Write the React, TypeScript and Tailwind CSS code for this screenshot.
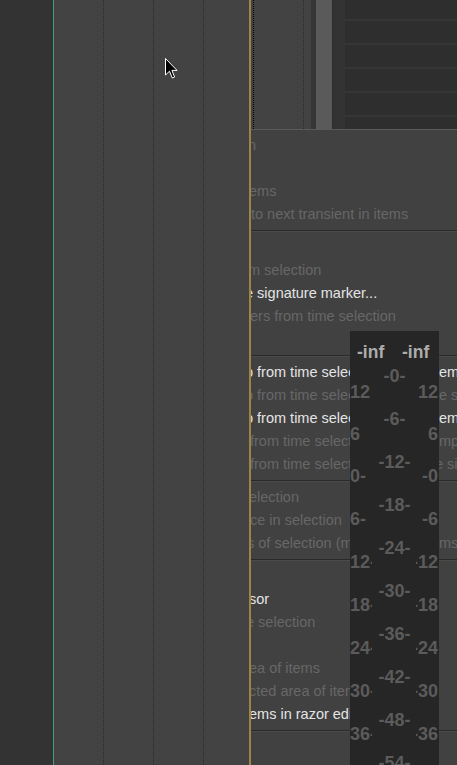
type Row = { l?: string; lx?: number; r?: string; rx?: number; hi?: boolean; rhi?: boolean };

const sections: Row[][] = [
  [
    { l: 'n', lx: -3 },
    {},
    { l: 'ems', lx: -2 },
    { l: 'to next transient in items', lx: 0 },
  ],
  [
    {},
    { l: 'm selection', lx: -3 },
    { l: 'e signature marker...', lx: -6, hi: true },
    { l: 'ers from time selection', lx: -1 },
    {},
  ],
  [
    { l: 'p from time selection', lx: -6, hi: true, r: 'ems', rhi: true },
    { l: 'p from time selection', lx: -6, r: 'e se' },
    { l: 'p from time selection', lx: -6, hi: true, r: 'ems', rhi: true },
    { l: 'from time selection', lx: -1, r: 'mpl' },
    { l: 'from time selection', lx: -1, r: 'e sig', rx: -4 },
  ],
  [
    { l: 'election', lx: -2 },
    { l: 'ce in selection', lx: -1 },
    { l: 's of selection (moving)', lx: -4, r: 'ms' },
  ],
  [
    {},
    { l: 'sor', lx: -2, hi: true },
    { l: 'e selection', lx: -5 },
    {},
    { l: 'ea of items', lx: -2 },
    { l: 'cted area of items', lx: -2 },
    { l: 'ems in razor edit area', lx: -2, hi: true },
  ],
  [{}, {}],
];

const centerTicks = ['-0-', '-6-', '-12-', '-18-', '-24-', '-30-', '-36-', '-42-', '-48-', '-54-'];
const edgeTicks = [
  { top: 51, l: '12', r: '12' },
  { top: 93, l: '6', r: '6' },
  { top: 135, l: '0-', r: '-0' },
  { top: 178, l: '6-', r: '-6' },
  { top: 221, l: '12-', r: '-12', cut: true },
  { top: 264, l: '18-', r: '-18', cut: true },
  { top: 307, l: '24-', r: '-24', cut: true },
  { top: 350, l: '30-', r: '-30', cut: true },
  { top: 393, l: '36-', r: '-36', cut: true },
];

function MenuRow({ row }: { row: Row }) {
  return (
    <div className="flex h-[23px] shrink-0 text-[14.5px] leading-[23px] whitespace-nowrap">
      <div className="w-[188px] shrink-0 overflow-hidden">
        {row.l && (
          <span
            className={row.hi ? 'text-[#e4e4e4]' : 'text-[#676767]'}
            style={{ marginLeft: row.lx ?? 0 }}
          >
            {row.l}
          </span>
        )}
      </div>
      <div className="flex-1 overflow-hidden">
        {row.r && (
          <span
            className={row.rhi ? 'text-[#e4e4e4]' : 'text-[#676767]'}
            style={{ marginLeft: row.rx ?? 0 }}
          >
            {row.r}
          </span>
        )}
      </div>
    </div>
  );
}

function Separator() {
  return (
    <div className="flex h-[10px] shrink-0 flex-col justify-center">
      <div className="h-px bg-[#2a2a2a]" />
      <div className="h-px bg-[#4b4b4b]" />
    </div>
  );
}

function Meter() {
  return (
    <div className="absolute left-[350px] top-[331px] h-[434px] w-[89px] overflow-hidden bg-[#262626] font-bold leading-[20px]">
      <span className="absolute left-[7px] top-[11px] text-[17.5px] text-[#adadad]">-inf</span>
      <span className="absolute left-[52px] top-[11px] text-[17.5px] text-[#adadad]">-inf</span>
      {centerTicks.map((t, i) => (
        <div
          key={t}
          className="absolute left-0 w-full text-center text-[18px] text-[#5b5b5b]"
          style={{ top: 35 + i * 43 }}
        >
          {t}
        </div>
      ))}
      {edgeTicks.map((t) => (
        <div key={t.top} className="absolute left-0 flex w-full justify-between text-[18px] text-[#5b5b5b]" style={{ top: t.top }}>
          <div className={t.cut ? 'w-[22px] overflow-hidden whitespace-nowrap' : 'whitespace-nowrap'}>{t.l}</div>
          <div className={t.cut ? 'mr-px flex w-[22px] justify-end overflow-hidden whitespace-nowrap' : 'mr-px whitespace-nowrap'}>
            {t.r}
          </div>
        </div>
      ))}
    </div>
  );
}

function Cursor() {
  return (
    <svg className="absolute left-[165px] top-[58px]" width="13" height="22" viewBox="0 0 13 22">
      <path
        d="M0.5 0.5 L0.5 17 L4.5 13.2 L7.3 20 L9.6 19 L6.9 12.4 L12 12.4 Z"
        fill="#000"
        stroke="#fff"
        strokeWidth="1"
        strokeLinejoin="miter"
      />
    </svg>
  );
}

export default function App() {
  return (
    <div className="relative flex h-[765px] w-[457px] overflow-hidden bg-[#333333] font-['Liberation_Sans',Arial,sans-serif]">
      <div className="w-[53px] shrink-0 bg-[#333333]" />
      <div className="w-px shrink-0 bg-[#3f9c8b]" />
      <div className="flex w-[195px] shrink-0 bg-[#434343]">
        <div className="w-[50px] border-r border-dotted border-[#2a2a2a]" />
        <div className="w-[50px] border-r border-dotted border-[#2a2a2a]" />
        <div className="w-[50px] border-r border-dotted border-[#2a2a2a]" />
        <div className="w-[45px]" />
      </div>
      <div className="w-[2px] shrink-0 bg-[#9e8442]" />
      <div className="flex w-[206px] shrink-0 flex-col">
        <div className="flex h-[129px] shrink-0">
          <div className="w-[2px] bg-[#434343]" />
          <div className="w-px border-l border-dotted border-black bg-[#434343]" />
          <div className="w-[49px] bg-[#434343]" />
          <div className="w-px border-l border-dotted border-[#2a2a2a] bg-[#434343]" />
          <div className="w-[7px] bg-[#434343]" />
          <div className="w-[5px] bg-[#363636]" />
          <div className="w-[16px] bg-[#5a5a5a]" />
          <div className="w-px bg-[#2d2d2d]" />
          <div className="w-[12px] bg-[#333333]" />
          <div className="flex flex-1 flex-col overflow-hidden bg-[#2e2e2e]">
            <div className="h-[19px] shrink-0" />
            {[0, 1, 2, 3, 4].map((i) => (
              <div key={i} className="shrink-0">
                <div className="h-[2px] bg-[#363636]" />
                <div className="h-[22px]" />
              </div>
            ))}
          </div>
        </div>
        <div className="h-px shrink-0 bg-[#5a5a5a]" />
        <div className="flex flex-1 flex-col overflow-hidden bg-[#414141] pt-[4px]">
          {sections.map((sec, si) => (
            <div key={si} className="flex shrink-0 flex-col">
              {sec.map((row, ri) => (
                <MenuRow key={ri} row={row} />
              ))}
              {si < sections.length - 1 && <Separator />}
            </div>
          ))}
        </div>
      </div>
      <Meter />
      <Cursor />
    </div>
  );
}
